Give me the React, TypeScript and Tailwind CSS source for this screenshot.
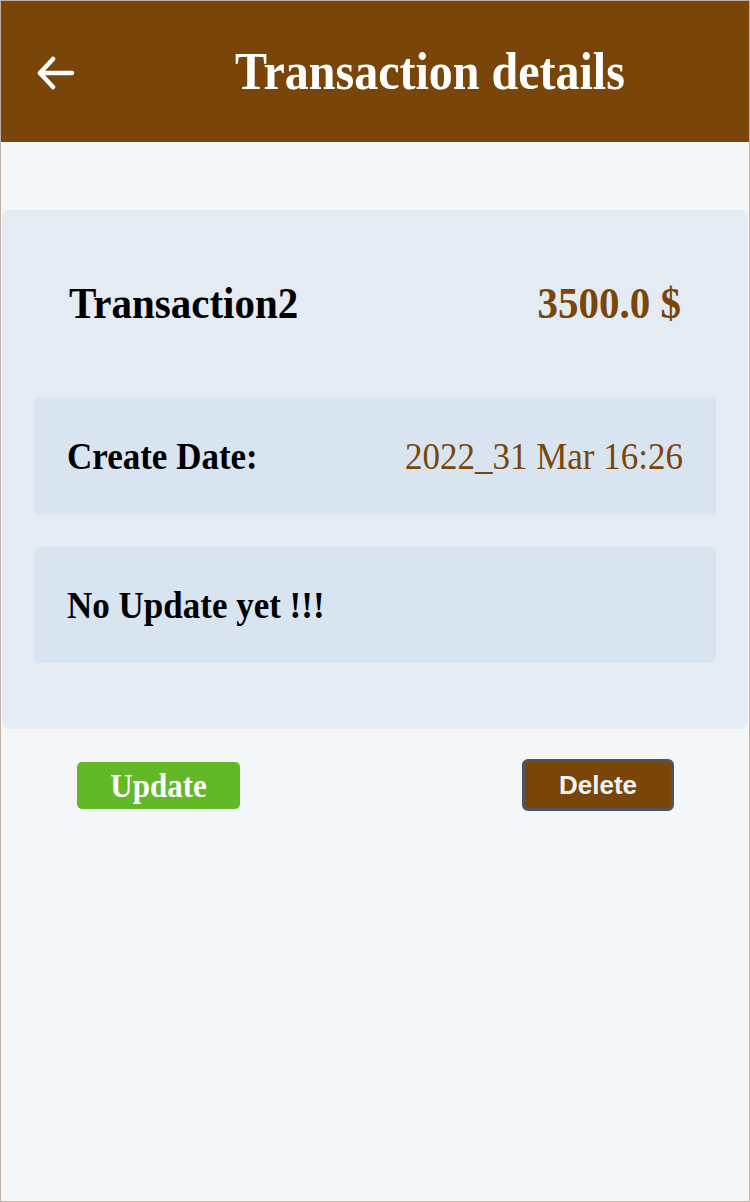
export default function App() {
  const serif = { fontFamily: '"Liberation Serif", "Times New Roman", serif' };

  return (
    <div className="h-[1202px] w-[750px] overflow-hidden border border-[#bdb3a8] bg-[#f5f6f8]" style={serif}>
      {/* Header */}
      <div className="flex h-[141px] items-center bg-[#7a4508]">
        <div className="flex w-[110px] shrink-0 items-center pl-[36px] pt-[2px]">
          <svg width="38" height="34" viewBox="0 0 38 34" fill="none" stroke="#ffffff" strokeWidth="4.5" strokeLinecap="round" strokeLinejoin="round">
            <path d="M3 17H35" />
            <path d="M16 3L3 17L16 31" />
          </svg>
        </div>
        <h1 className="flex-1 pb-[2px] text-center text-[48px] font-bold leading-none text-white">
          <span className="inline-block scale-y-[1.1]">Transaction details</span>
        </h1>
      </div>

      {/* Card */}
      <div className="mx-[1px] mt-[68px] rounded-[8px] bg-[#e4ebf3] px-[32px] pb-[66px] pt-[73px]">
        <div className="flex items-center justify-between px-[35px]">
          <span className="inline-block scale-y-[1.1] text-[41px] font-bold leading-none text-black">Transaction2</span>
          <span className="inline-block scale-y-[1.1] text-[41px] font-bold leading-none text-[#7a4508]">3500.0 $</span>
        </div>

        <div className="mt-[73px] flex h-[118px] items-center justify-between rounded-[6px] bg-[#d8e4ef] px-[33px]">
          <span className="inline-block scale-y-[1.1] text-[35px] font-bold leading-none text-black">Create Date:</span>
          <span className="inline-block scale-y-[1.1] text-[35px] leading-none text-[#7a4508]">2022_31 Mar 16:26</span>
        </div>

        <div className="mt-[32px] flex h-[116px] items-center rounded-[6px] bg-[#d8e4ef] px-[33px]">
          <span className="inline-block scale-y-[1.1] text-[35px] font-bold leading-none text-black">No Update yet !!!</span>
        </div>
      </div>

      {/* Actions */}
      <div className="mt-[30px] flex items-center justify-between pl-[76px] pr-[75px]">
        <button className="flex h-[47px] w-[163px] items-center justify-center rounded-[5px] bg-[#62b826] text-[31px] font-bold leading-none text-white" style={serif}>
          <span className="inline-block scale-y-[1.1]">Update</span>
        </button>
        <button
          className="flex h-[52px] w-[152px] items-center justify-center rounded-[6px] border-[3px] border-[#4b5563] bg-[#7a4508] text-[26px] font-bold leading-none text-[#f0f2f8]"
          style={{ fontFamily: '"Liberation Sans", Arial, sans-serif' }}
        >
          Delete
        </button>
      </div>
    </div>
  );
}
